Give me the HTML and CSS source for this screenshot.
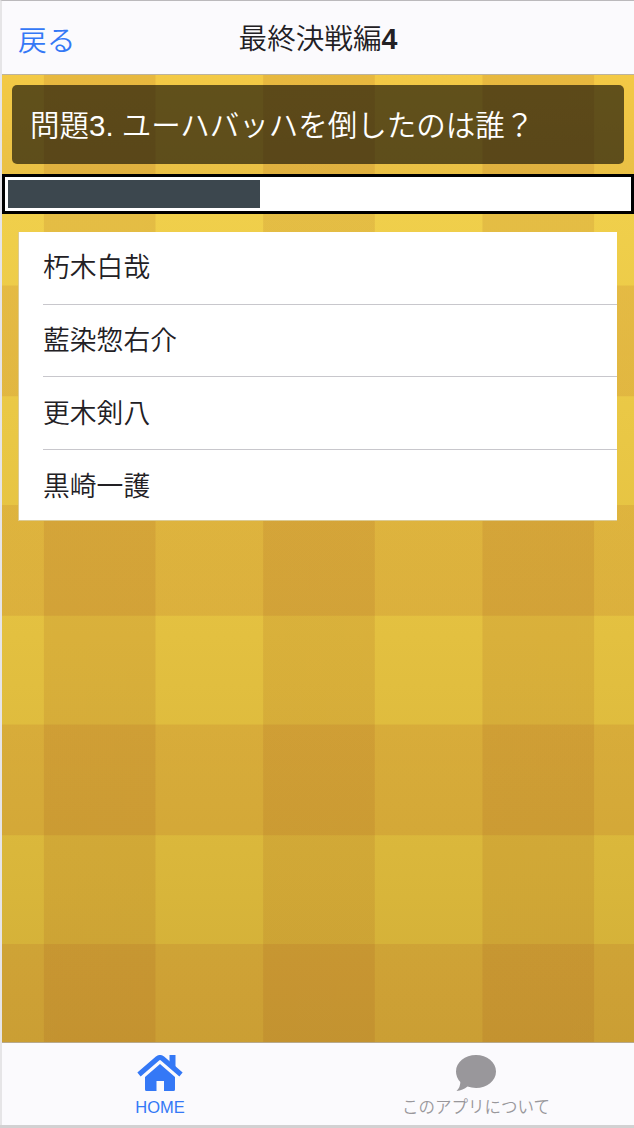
FILE: index.html
```html
<!DOCTYPE html>
<html lang="ja">
<head>
    <meta charset="UTF-8">
    <meta name="viewport" content="width=device-width, initial-scale=1.0">
    <title>最終決戦編4</title>
    <link rel="stylesheet" href="styles.css">
</head>
<body>
    <div class="app">
        <header class="navbar">
            <a class="back">戻る</a>
            <h1 class="title">最終決戦編<b>4</b></h1>
        </header>

        <main class="content">
            <div class="question"><p>問題<span class="num">3. </span>ユーハバッハを倒したのは誰？</p></div>
            <div class="progress">
                <div class="progress-bar" style="width: 40.6%"></div>
            </div>
            <ul class="answers">
                <li>朽木白哉</li>
                <li>藍染惣右介</li>
                <li>更木剣八</li>
                <li>黒崎一護</li>
            </ul>
        </main>

        <nav class="tabbar">
            <a class="tab active">
                <svg width="46" height="36" viewBox="0 0 46 36">
                    <path d="M32.500 0H38.500V15L32.500 9.500z"/>
                    <path d="M2 19.500L20.500 3.500q2.500-2 5 0L44 19.500" fill="none" stroke="currentColor" stroke-width="5"/>
                    <path d="M8 22L23 9L38 22V34.500q0 1.500-1.500 1.500H27V26h-7.500v10H9.500Q8 36 8 34.500z"/>
                </svg>
                <span class="num">HOME</span>
            </a>
            <a class="tab">
                <svg width="40" height="36" viewBox="0 0 40 36">
                    <path d="M20 0C31 0 40 7.200 40 16.500S31 33 20 33q-4.500 0-8.500-1.400Q7 35.500 0.500 36Q4.500 32 4.300 27Q0 22.500 0 16.500C0 7.200 9 0 20 0z"/>
                </svg>
                <span>このアプリについて</span>
            </a>
        </nav>
    </div>
</body>
</html>
```
FILE: styles.css
```css
* {
    box-sizing: border-box;
}

body {
    margin: 0;
    background: #d2d1d2;
    font-family: "Liberation Sans", "Noto Sans CJK JP", sans-serif;
    font-weight: 350;
    color: #222024;
}

.app {
    display: flex;
    flex-direction: column;
    height: 1125px;
    border-top: 1px solid #bbb9bc;
    border-left: 2px solid #e6e5e7;
}

.navbar {
    display: grid;
    grid-template-columns: 1fr auto 1fr;
    align-items: center;
    height: 74px;
    padding: 0 16px 0 16px;
    background: #fbfafd;
    border-bottom: 1px solid #bcb39f;
}

.back {
    font-size: 28.8px;
    color: #3478f6;
    padding-top: 2px;
}

.title {
    margin: 0;
    padding-bottom: 2px;
    font-size: 28.6px;
    font-weight: 350;
}

.num {
    font-family: "Liberation Sans", sans-serif;
    font-weight: 400;
    white-space: pre;
}

/* gingham: vertical and horizontal bands over a fading yellow */
.content {
    flex: 1;
    padding-top: 10px;
    background:
        linear-gradient(90deg, transparent 42px, rgba(145, 60, 20, 0.12) 42px, rgba(145, 60, 20, 0.12) 154px, transparent 154px) 0 0 / 219.3px 100%,
        linear-gradient(rgba(165, 65, 30, 0.13) 102px, transparent 102px, transparent 211px, rgba(165, 65, 30, 0.13) 211px) 0 0 / 100% 219.5px,
        linear-gradient(#ffde4b, #f0cf4b 14%, #e3c040 58%, #d8b53a 85%, #d0ac37);
}

.question {
    display: flex;
    align-items: center;
    height: 79px;
    margin: 0 10px;
    padding-left: 18px;
    border-radius: 5px;
    background: rgba(0, 0, 0, 0.6);
    color: #fff;
    font-size: 29.5px;
    white-space: nowrap;
}

.question p {
    margin: 0;
    padding-bottom: 3px;
}

.progress {
    height: 40px;
    margin-top: 10px;
    padding: 3px;
    border: 3px solid #000;
    background: #fff;
}

.progress-bar {
    height: 28px;
    background: #3c474e;
}

.answers {
    margin: 18px 17px 0 16px;
    padding: 0 0 0 24px;
    height: 289px;
    list-style: none;
    background: #fff;
    border: 1px solid #dccb93;
    border-width: 0 0 1px 1px;
}

.answers li {
    display: flex;
    align-items: center;
    height: 72.7px;
    padding-bottom: 4px;
    border-bottom: 1px solid #c8c7cc;
    font-size: 26.8px;
}

.answers li:last-child {
    height: 71px;
    padding-bottom: 3px;
    border-bottom: none;
}

.tabbar {
    display: flex;
    height: 83px;
    background: #fbfafd;
    border-top: 1px solid #b8a98c;
}

.tab {
    flex: 1;
    display: flex;
    flex-direction: column;
    align-items: center;
    padding-top: 12px;
    color: #99979b;
    font-size: 16.5px;
    line-height: 20px;
}

.tab svg {
    fill: currentColor;
    margin-bottom: 6px;
}

.active {
    color: #3478f6;
}
```
